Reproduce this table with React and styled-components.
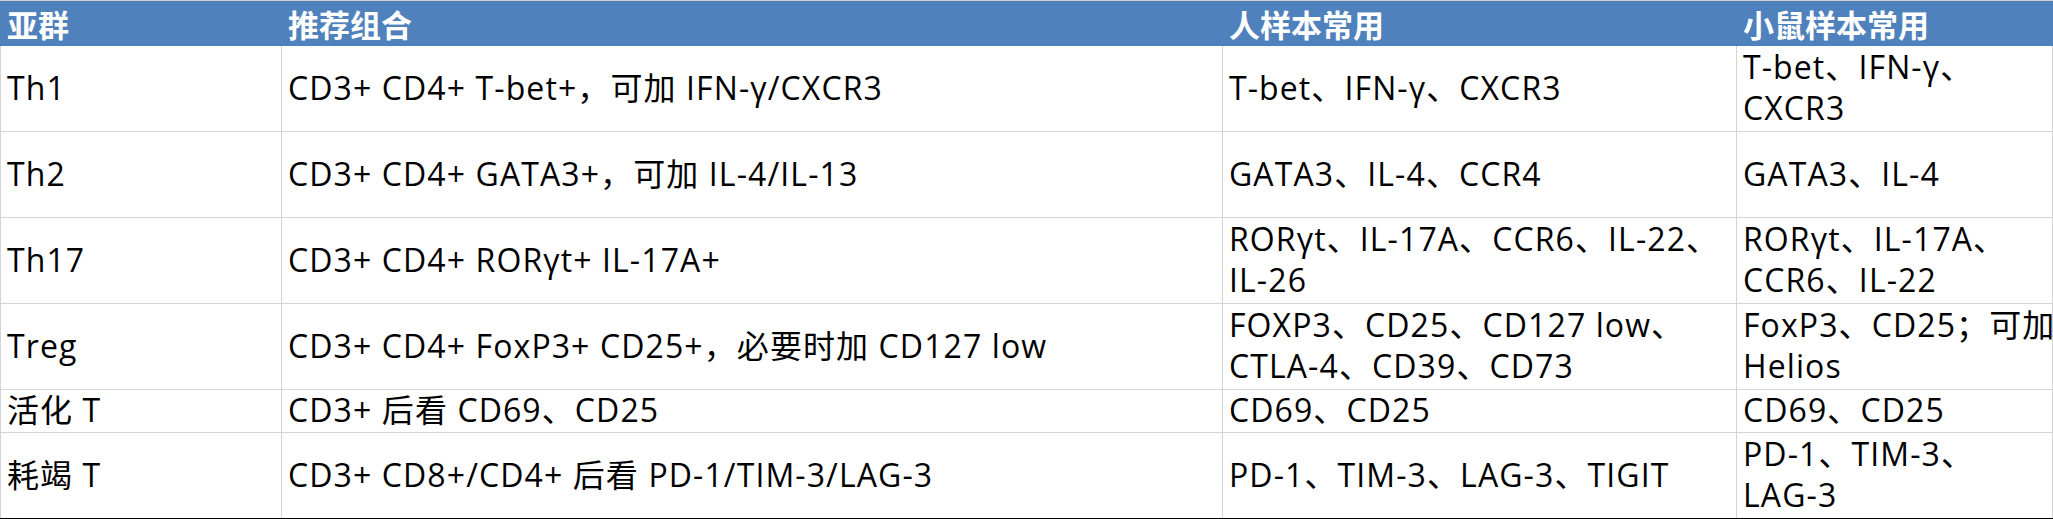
import React from "react";
import styled, { createGlobalStyle } from "styled-components";

const Global = createGlobalStyle`
  html, body { margin: 0; padding: 0; background: #ffffff; }
  body { font-family: "Open Sans", "Noto Sans CJK SC", sans-serif; }
`;

const COLS = "280px 940px 513px 315px";

const Sheet = styled.div`
  width: 2053px;
  height: 519px;
  box-sizing: border-box;
  border-top: 1px solid #d0d0d0;
  background: #ffffff;
  overflow: hidden;
`;

const HeaderRow = styled.div`
  display: grid;
  grid-template-columns: ${COLS};
  column-gap: 1px;
  padding: 0 1px;
  height: 45px;
  background: #4f81bd;
`;

const HeadCell = styled.div`
  display: flex;
  align-items: center;
  padding: 0 6px;
  color: #ffffff;
  font-family: "Noto Sans CJK SC", sans-serif;
  font-weight: 700;
  font-size: 31px;
  line-height: 1;
  white-space: nowrap;
`;

const Body = styled.div`
  display: grid;
  grid-template-columns: ${COLS};
  gap: 1px;
  padding: 0 1px;
  background: #d4d4d4;
  border-bottom: 1px solid #000000;
`;

const Cell = styled.div`
  display: flex;
  flex-direction: column;
  justify-content: center;
  box-sizing: border-box;
  min-width: 0;
  padding: 0 0 3px 6px;
  background: #ffffff;
  color: #000000;
  font-family: "Open Sans", "Noto Sans CJK SC", sans-serif;
  font-size: 32px;
  letter-spacing: 1.1px;
  line-height: 41px;
  height: ${(p) => (p.$short ? "42px" : "85px")};
`;

const Line = styled.span`
  white-space: nowrap;
`;

const headers = ["亚群", "推荐组合", "人样本常用", "小鼠样本常用"];

const rows = [
  {
    cells: [
      ["Th1"],
      ["CD3+ CD4+ T-bet+，可加 IFN-γ/CXCR3"],
      ["T-bet、IFN-γ、CXCR3"],
      ["T-bet、IFN-γ、", "CXCR3"],
    ],
  },
  {
    cells: [
      ["Th2"],
      ["CD3+ CD4+ GATA3+，可加 IL-4/IL-13"],
      ["GATA3、IL-4、CCR4"],
      ["GATA3、IL-4"],
    ],
  },
  {
    cells: [
      ["Th17"],
      ["CD3+ CD4+ RORγt+ IL-17A+"],
      ["RORγt、IL-17A、CCR6、IL-22、", "IL-26"],
      ["RORγt、IL-17A、", "CCR6、IL-22"],
    ],
  },
  {
    cells: [
      ["Treg"],
      ["CD3+ CD4+ FoxP3+ CD25+，必要时加 CD127 low"],
      ["FOXP3、CD25、CD127 low、", "CTLA-4、CD39、CD73"],
      ["FoxP3、CD25；可加", "Helios"],
    ],
  },
  {
    short: true,
    cells: [["活化 T"], ["CD3+ 后看 CD69、CD25"], ["CD69、CD25"], ["CD69、CD25"]],
  },
  {
    cells: [
      ["耗竭 T"],
      ["CD3+ CD8+/CD4+ 后看 PD-1/TIM-3/LAG-3"],
      ["PD-1、TIM-3、LAG-3、TIGIT"],
      ["PD-1、TIM-3、", "LAG-3"],
    ],
  },
];

export default function App() {
  return (
    <>
      <Global />
      <Sheet>
        <HeaderRow>
          {headers.map((h) => (
            <HeadCell key={h}>{h}</HeadCell>
          ))}
        </HeaderRow>
        <Body style={{ gridTemplateRows: rows.map((r) => (r.short ? "42px" : "85px")).join(" ") }}>
          {rows.map((r, ri) =>
            r.cells.map((lines, ci) => (
              <Cell key={`${ri}-${ci}`} $short={r.short}>
                {lines.map((l, li) => (
                  <Line key={li}>{l}</Line>
                ))}
              </Cell>
            ))
          )}
        </Body>
      </Sheet>
    </>
  );
}
